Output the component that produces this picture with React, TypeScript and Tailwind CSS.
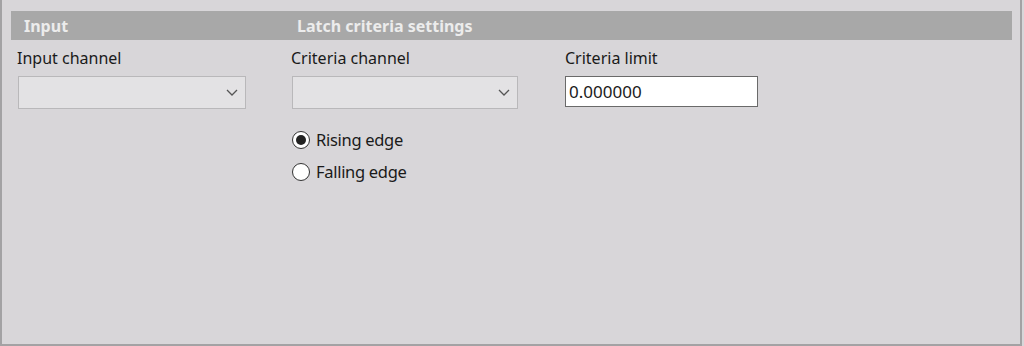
const Chevron = () => (
  <svg width="12" height="7" viewBox="0 0 12 7" fill="none" className="mr-[7px]">
    <path d="M1 1l5 5 5-5" stroke="#555" strokeWidth="1.3" />
  </svg>
);

const Select = ({ width }: { width: string }) => (
  <div
    className={`${width} h-[33px] mt-[8px] flex items-center justify-end border border-[#b9b8ba] bg-[#e3e2e4]`}
  >
    <Chevron />
  </div>
);

const Radio = ({ label, checked }: { label: string; checked?: boolean }) => (
  <label className="h-[32px] flex items-center gap-[6px] ml-[1px] text-[16.5px]">
    <span className="w-[18px] h-[18px] rounded-full border-[1.5px] border-[#333] bg-white flex items-center justify-center">
      {checked && <span className="w-[10px] h-[10px] rounded-full bg-[#222]" />}
    </span>
    <span className="-tracking-[0.3px]">{label}</span>
  </label>
);

export default function App() {
  return (
    <div
      className="w-[1024px] h-[346px] bg-[#d8d6d9] text-[#1a1a1a] text-[16px]"
      style={{ fontFamily: '"Noto Sans", "Open Sans", sans-serif' }}
    >
      <div className="w-[1022px] h-full border-l-2 border-r-2 border-b-2 border-[#a3a2a4] pt-[11px]">
        {/* section header */}
        <div className="ml-[9px] mr-[8px] h-[29px] bg-[#a8a8a8] flex items-center text-[16px] font-bold text-[#ececec]">
          <div className="w-[286px] pl-[13px]">Input</div>
          <div>Latch criteria settings</div>
        </div>

        <div className="grid grid-cols-[274px_274px_274px] pl-[15px] pt-[8px]">
          <div>
            <div className="h-[20px] leading-[20px]">Input channel</div>
            <Select width="w-[228px] ml-[1px]" />
          </div>

          <div>
            <div className="h-[20px] leading-[20px]">Criteria channel</div>
            <Select width="w-[226px] ml-[1px]" />
            <div className="mt-[15px]">
              <Radio label="Rising edge" checked />
              <Radio label="Falling edge" />
            </div>
          </div>

          <div>
            <div className="h-[20px] leading-[20px]">Criteria limit</div>
            <div className="w-[193px] h-[31px] mt-[8px] border border-[#6a6a6a] bg-white flex items-center pl-[3px] text-[17px]">
              0.000000
            </div>
          </div>
        </div>
      </div>
    </div>
  );
}
